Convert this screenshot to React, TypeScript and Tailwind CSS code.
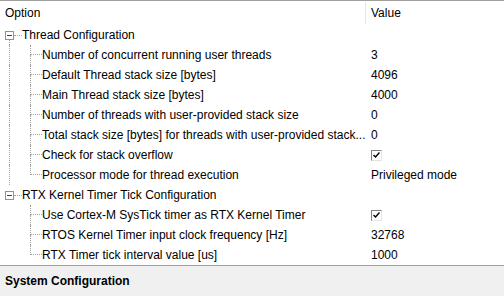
import React from 'react';

type Item = { label: string; value?: string; check?: boolean };
type Group = { title: string; items: Item[] };

const groups: Group[] = [
  {
    title: 'Thread Configuration',
    items: [
      { label: 'Number of concurrent running user threads', value: '3' },
      { label: 'Default Thread stack size [bytes]', value: '4096' },
      { label: 'Main Thread stack size [bytes]', value: '4000' },
      { label: 'Number of threads with user-provided stack size', value: '0' },
      { label: 'Total stack size [bytes] for threads with user-provided stack...', value: '0' },
      { label: 'Check for stack overflow', check: true },
      { label: 'Processor mode for thread execution', value: 'Privileged mode' },
    ],
  },
  {
    title: 'RTX Kernel Timer Tick Configuration',
    items: [
      { label: 'Use Cortex-M SysTick timer as RTX Kernel Timer', check: true },
      { label: 'RTOS Kernel Timer input clock frequency [Hz]', value: '32768' },
      { label: 'RTX Timer tick interval value [us]', value: '1000' },
    ],
  },
];

function CheckBox() {
  return (
    <span className="flex h-[11px] w-[11px] items-center justify-center border border-t-[#828282] border-l-[#828282] border-r-[#e3e3e3] border-b-[#e3e3e3] bg-white">
      <svg width="7" height="6" viewBox="0 0 7 6">
        <path d="M0.5 3 L2.5 5 L6.5 0.5" fill="none" stroke="#000" strokeWidth="1.4" />
      </svg>
    </span>
  );
}

function GroupRow({ title, last }: { title: string; last: boolean }) {
  return (
    <div className="flex h-[20px]">
      <div className="relative flex w-[366px] items-center">
        <div className="ml-[5px] flex h-[9px] w-[9px] shrink-0 items-center justify-center border border-[#919191] bg-white">
          <span className="h-px w-[5px] bg-[#444]" />
        </div>
        <span className="w-[8px] border-b border-dotted border-[#a0a0a0]" />
        <span className="whitespace-nowrap">{title}</span>
        {!last && (
          <span className="absolute left-[9px] top-[15px] h-[5px] border-l border-dotted border-[#a0a0a0]" />
        )}
      </div>
    </div>
  );
}

function ItemRow({ item, lastItem, lastGroup }: { item: Item; lastItem: boolean; lastGroup: boolean }) {
  return (
    <div className="flex h-[20px]">
      <div className="flex w-[364px] items-stretch">
        <div className="ml-[9px] w-[21px] shrink-0">
          {!lastGroup && <div className="h-full border-l border-dotted border-[#a0a0a0]" />}
        </div>
        <div className="flex w-[12px] shrink-0 flex-col">
          <div className="h-[10px] border-l border-b border-dotted border-[#a0a0a0]" />
          <div className={`h-[10px] border-l border-dotted ${lastItem ? 'border-transparent' : 'border-[#a0a0a0]'}`} />
        </div>
        <span className="self-center whitespace-nowrap">{item.label}</span>
      </div>
      <div className="flex items-center pl-[7px]">
        {item.check ? <CheckBox /> : <span className="whitespace-nowrap">{item.value}</span>}
      </div>
    </div>
  );
}

export default function App() {
  return (
    <div
      className="flex h-[296px] w-[504px] flex-col overflow-hidden bg-white text-[12px] text-black"
      style={{ fontFamily: '"Liberation Sans", Arial, sans-serif' }}
    >
      <div className="flex h-[25px] shrink-0 border-t border-[#a0a0a0]">
        <div className="flex w-[365px] items-center pl-[5px]">Option</div>
        <div className="my-[1px] w-px bg-[#e5e5e5]" />
        <div className="flex items-center pl-[5px]">Value</div>
      </div>
      <div className="flex-1">
        {groups.map((g, gi) => (
          <React.Fragment key={g.title}>
            <GroupRow title={g.title} last={gi === groups.length - 1} />
            {g.items.map((it, ii) => (
              <ItemRow
                key={it.label}
                item={it}
                lastItem={ii === g.items.length - 1}
                lastGroup={gi === groups.length - 1}
              />
            ))}
          </React.Fragment>
        ))}
      </div>
      <div className="flex h-[31px] shrink-0 items-center border-t border-[#a0a0a0] bg-[#f0f0f0] pl-[5px] font-bold">
        System Configuration
      </div>
    </div>
  );
}
